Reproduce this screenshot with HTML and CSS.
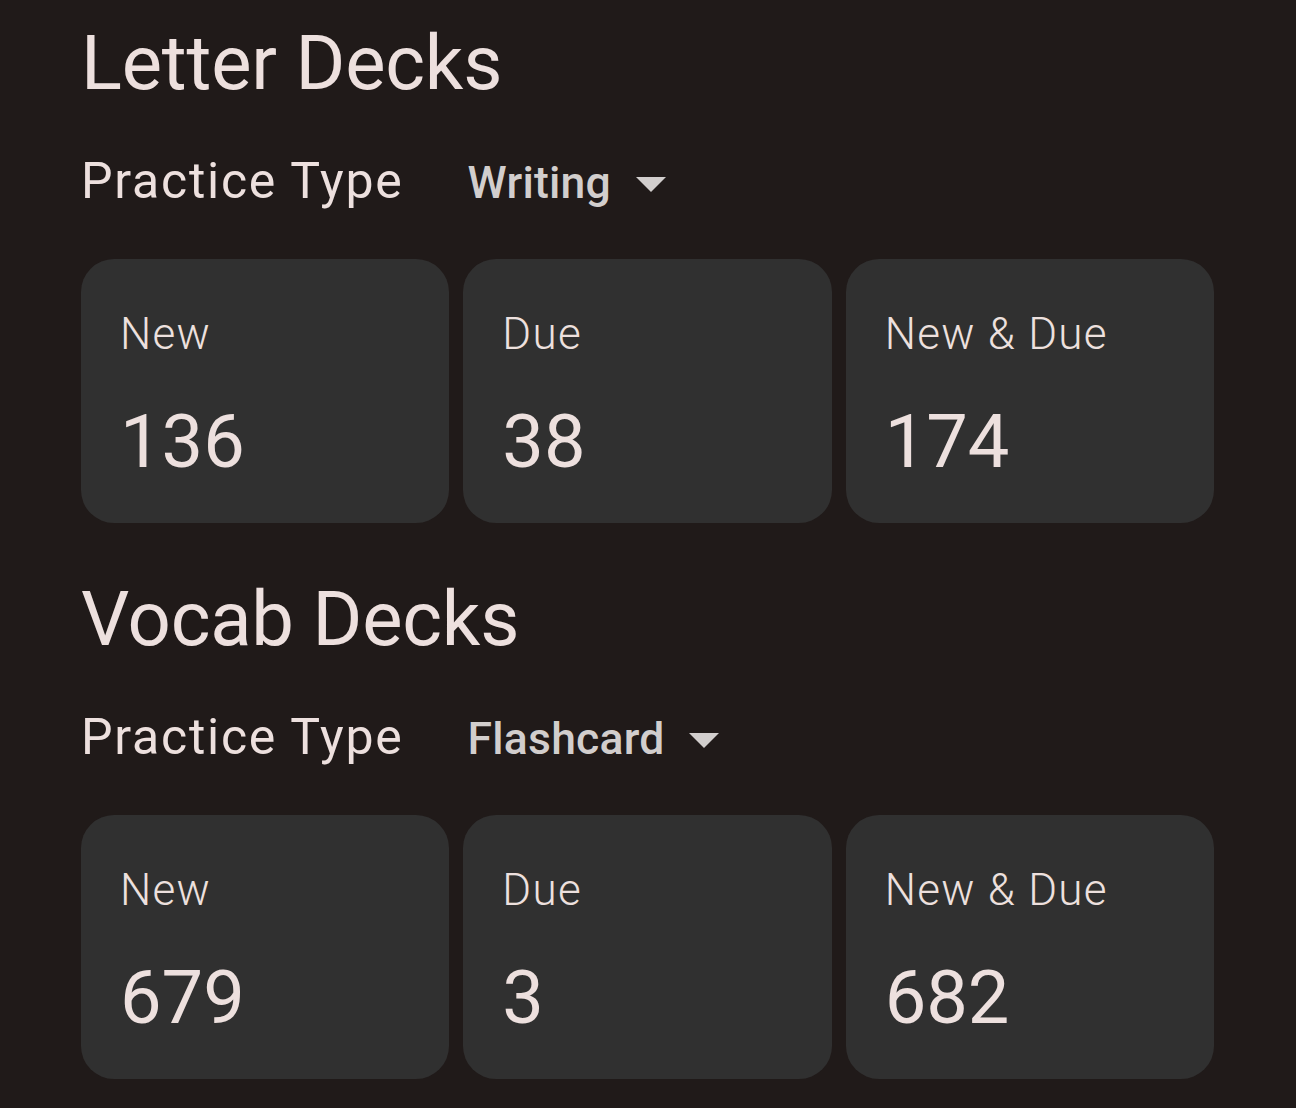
FILE: index.html
```html
<!DOCTYPE html>
<html lang="en">
<head>
<meta charset="utf-8">
<title>Decks</title>
<link rel="stylesheet" href="styles.css">
</head>
<body>
<main class="page">
  <section class="deck">
    <h1 class="deck-title">Letter Decks</h1>
    <div class="practice-row">
      <span class="practice-label">Practice Type</span>
      <button class="dropdown" type="button">
        <span class="dropdown-value">Writing</span>
        <svg class="dropdown-arrow" viewBox="0 0 30 15" width="30" height="15" aria-hidden="true"><path d="M0 0 L30 0 L15 15 Z" fill="currentColor"/></svg>
      </button>
    </div>
    <div class="stats">
      <div class="stat-card"><div class="stat-label">New</div><div class="stat-value">136</div></div>
      <div class="stat-card"><div class="stat-label">Due</div><div class="stat-value">38</div></div>
      <div class="stat-card"><div class="stat-label">New &amp; Due</div><div class="stat-value">174</div></div>
    </div>
  </section>
  <section class="deck">
    <h1 class="deck-title">Vocab Decks</h1>
    <div class="practice-row">
      <span class="practice-label">Practice Type</span>
      <button class="dropdown" type="button">
        <span class="dropdown-value">Flashcard</span>
        <svg class="dropdown-arrow" viewBox="0 0 30 15" width="30" height="15" aria-hidden="true"><path d="M0 0 L30 0 L15 15 Z" fill="currentColor"/></svg>
      </button>
    </div>
    <div class="stats">
      <div class="stat-card"><div class="stat-label">New</div><div class="stat-value">679</div></div>
      <div class="stat-card"><div class="stat-label">Due</div><div class="stat-value">3</div></div>
      <div class="stat-card"><div class="stat-label">New &amp; Due</div><div class="stat-value">682</div></div>
    </div>
  </section>
</main>
</body>
</html>
```
FILE: styles.css
```css
html, body {
  margin: 0;
  padding: 0;
  background: #201a19;
}

body {
  font-family: Roboto, "Noto Sans", sans-serif;
  color: #ede0de;
  min-height: 1108px;
}

.page {
  display: flex;
  flex-direction: column;
  gap: 50px;
  padding: 17px 82px 0 81px;
}

.deck {
  display: flex;
  flex-direction: column;
}

.deck-title {
  margin: 0 0 42px 0;
  font-size: 76px;
  line-height: 92px;
  font-weight: 400;
  letter-spacing: -0.2px;
}

.practice-row {
  display: flex;
  align-items: baseline;
  gap: 64px;
  height: 60px;
  margin-bottom: 48px;
}

.practice-label {
  font-size: 50px;
  line-height: 60px;
  font-weight: 400;
  letter-spacing: 1.75px;
}

.dropdown {
  display: flex;
  align-items: center;
  gap: 25px;
  padding: 0;
  border: 0;
  background: none;
  color: #d2cecd;
  font-family: inherit;
  cursor: pointer;
}

.dropdown-value {
  font-size: 44.5px;
  line-height: 60px;
  font-weight: 500;
  letter-spacing: 0.2px;
}

.dropdown-arrow {
  display: block;
  margin-top: 2px;
}

.stats {
  display: grid;
  grid-template-columns: repeat(3, 1fr);
  gap: 14px;
}

.stat-card {
  background: #303030;
  border-radius: 33px;
  height: 264px;
  box-sizing: border-box;
  padding: 49px 40px 0 39px;
  display: flex;
  flex-direction: column;
  gap: 38px;
}

.stat-label {
  font-size: 44px;
  line-height: 52px;
  font-weight: 300;
  letter-spacing: 1.3px;
}

.stat-value {
  font-size: 74px;
  line-height: 88px;
  font-weight: 400;
}
```
